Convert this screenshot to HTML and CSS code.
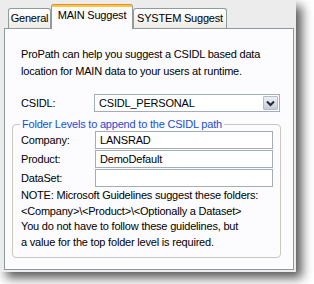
FILE: index.html
```html
<html>
    <head>
        <link rel="stylesheet" href="styles.css">
    </head>
    <body>
        <div class="window">
            <div class="tabs">
                <div class="tab general">General</div>
                <div class="tab active">MAIN Suggest</div>
                <div class="tab system">SYSTEM Suggest</div>
            </div>
            <div class="panel">
                <p class="intro">ProPath can help you suggest a CSIDL based data<br />location for MAIN data to your users at runtime.</p>
                <div class="csidl">
                    <label>CSIDL:</label>
                    <div class="select">
                        <span class="value">CSIDL_PERSONAL</span>
                        <span class="dropbtn">
                            <svg width="9" height="7" viewBox="0 0 9 7"><path d="M1 1.5 L4.5 5 L8 1.5" fill="none" stroke="#1e2a3c" stroke-width="2"/></svg>
                        </span>
                    </div>
                </div>
                <fieldset class="group">
                    <legend>Folder Levels to append to the CSIDL path</legend>
                    <div class="field"><label>Company:</label><div class="input">LANSRAD</div></div>
                    <div class="field"><label>Product:</label><div class="input">DemoDefault</div></div>
                    <div class="field"><label>DataSet:</label><div class="input"></div></div>
                    <p class="note">NOTE: Microsoft Guidelines suggest these folders:<br />&lt;Company&gt;\&lt;Product&gt;\&lt;Optionally a Dataset&gt;<br />You do not have to follow these guidelines, but<br />a value for the top folder level is required.</p>
                </fieldset>
            </div>
        </div>
    </body>
</html>
```

FILE: styles.css
```css
body
{
    margin:0;
    background:#fff;
    color:#000;
    font-family:"Liberation Sans", Arial, sans-serif;
    font-size:11px;
    letter-spacing:-0.2px;
}
div.window
{
    width:290px;
    height:270px;
    padding:0 2px 2px 4px;
    background:#ececec;
    box-shadow:6px 6px 10px rgba(0, 0, 0, 0.65);
    display:flex;
    flex-direction:column;
}
div.tabs
{
    display:flex;
    align-items:flex-end;
    height:28px;
    padding-left:4px;
}
div.tab
{
    box-sizing:border-box;
    height:20px;
    line-height:19px;
    text-align:center;
    border:1px solid #919b9c;
    border-bottom:none;
    border-radius:3px 3px 0 0;
    background:linear-gradient(#fff, #ecebe6);
}
div.general { width:43px; }
div.system { width:94px; }
div.active
{
    position:relative;
    z-index:1;
    width:82px;
    height:25px;
    margin-bottom:-1px;
    line-height:22px;
    border-top:none;
    background:linear-gradient(#e68b2c 0, #e68b2c 1px, #ffc83c 1px, #ffc83c 3px, #fcfcfe 3px);
}
div.panel
{
    flex:1;
    border:1px solid #919b9c;
    background:#fcfcfe;
    padding-top:17px;
}
p.intro
{
    margin:0 0 0 16px;
    line-height:17px;
}
div.csidl
{
    display:flex;
    align-items:center;
    margin:14px 13px 0 16px;
}
div.csidl label { width:73px; }
div.select
{
    flex:1;
    box-sizing:border-box;
    height:18px;
    padding:1px;
    border:1px solid #a5acb2;
    background:#fff;
    display:flex;
    align-items:center;
}
span.value
{
    flex:1;
    padding-left:3px;
}
span.dropbtn
{
    box-sizing:border-box;
    width:15px;
    height:14px;
    border:1px solid #b4bccb;
    border-radius:1px;
    background:linear-gradient(#eef0f5, #c6ccd8);
    display:flex;
    align-items:center;
    justify-content:center;
}
fieldset.group
{
    margin:6px 12px 0 7px;
    padding:0 7px 7px 8px;
    border:1px solid #c8c8bc;
    border-radius:4px;
}
fieldset.group legend
{
    margin-left:-1px;
    padding:0 2px;
    line-height:13px;
    color:#1a4ed0;
}
div.field
{
    display:flex;
    align-items:center;
    margin-bottom:1px;
}
div.field label { width:74px; }
div.input
{
    flex:1;
    box-sizing:border-box;
    height:18px;
    line-height:16px;
    padding-left:4px;
    border:1px solid #a5acb2;
    background:#fff;
}
p.note
{
    margin:0;
    line-height:15.5px;
}
```
